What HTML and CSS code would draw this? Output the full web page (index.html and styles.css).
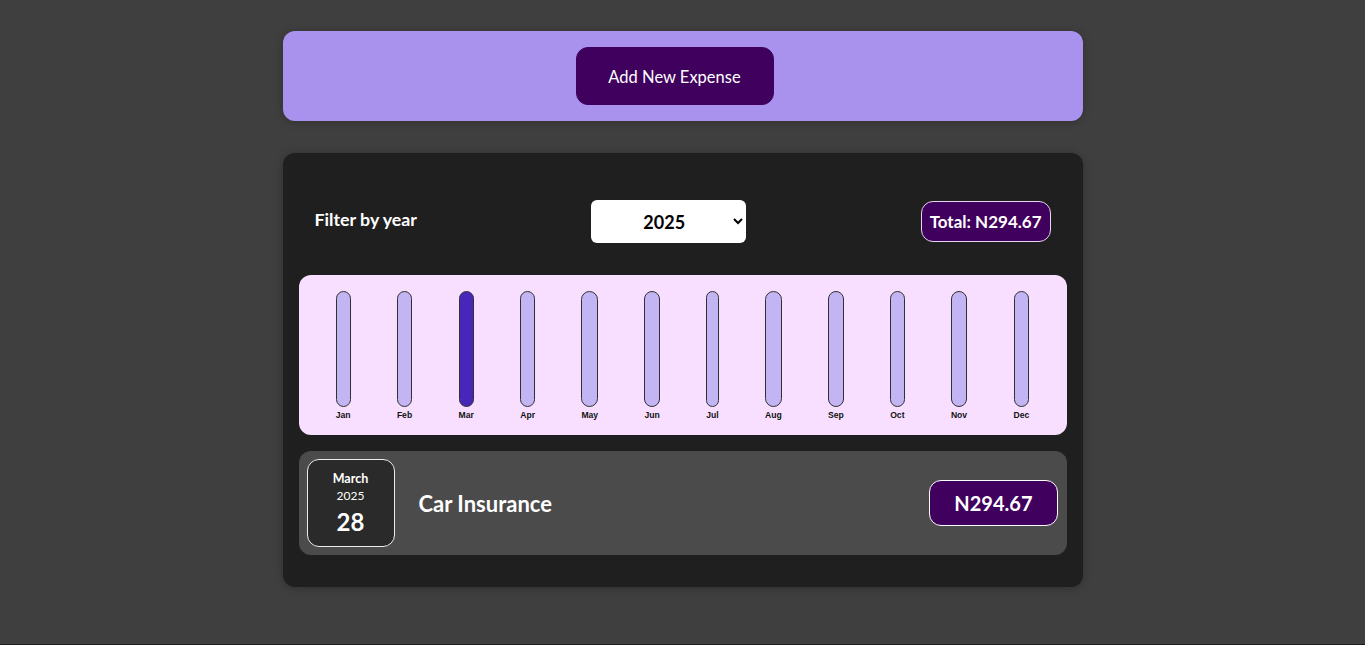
FILE: index.html
```html
<!DOCTYPE html>
<html lang="en">
<head>
<meta charset="utf-8">
<title>Expenses</title>
<link rel="stylesheet" href="styles.css">
</head>
<body>
<div class="new-expense">
  <button class="new-expense__btn">Add New Expense</button>
</div>
<div class="expenses">
  <div class="filter">
    <label class="filter__label">Filter by year</label>
    <select class="filter__select">
      <option>2022</option>
      <option>2023</option>
      <option>2024</option>
      <option selected>2025</option>
    </select>
    <div class="total">Total: N294.67</div>
  </div>
  <div class="chart">
    <div class="chart-bar"><div class="chart-bar__inner"></div><div class="chart-bar__label">Jan</div></div>
    <div class="chart-bar"><div class="chart-bar__inner"></div><div class="chart-bar__label">Feb</div></div>
    <div class="chart-bar"><div class="chart-bar__inner chart-bar__inner--fill"></div><div class="chart-bar__label">Mar</div></div>
    <div class="chart-bar"><div class="chart-bar__inner"></div><div class="chart-bar__label">Apr</div></div>
    <div class="chart-bar"><div class="chart-bar__inner"></div><div class="chart-bar__label">May</div></div>
    <div class="chart-bar"><div class="chart-bar__inner"></div><div class="chart-bar__label">Jun</div></div>
    <div class="chart-bar"><div class="chart-bar__inner"></div><div class="chart-bar__label">Jul</div></div>
    <div class="chart-bar"><div class="chart-bar__inner"></div><div class="chart-bar__label">Aug</div></div>
    <div class="chart-bar"><div class="chart-bar__inner"></div><div class="chart-bar__label">Sep</div></div>
    <div class="chart-bar"><div class="chart-bar__inner"></div><div class="chart-bar__label">Oct</div></div>
    <div class="chart-bar"><div class="chart-bar__inner"></div><div class="chart-bar__label">Nov</div></div>
    <div class="chart-bar"><div class="chart-bar__inner"></div><div class="chart-bar__label">Dec</div></div>
  </div>
  <div class="expense-item">
    <div class="expense-date">
      <div class="expense-date__month">March</div>
      <div class="expense-date__year">2025</div>
      <div class="expense-date__day">28</div>
    </div>
    <h2 class="expense-item__title">Car Insurance</h2>
    <div class="expense-item__price">N294.67</div>
  </div>
</div>
</body>
</html>
```
FILE: styles.css
```css
* { box-sizing: border-box; }

body {
  margin: 0;
  padding-top: 31px;
  min-height: 645px;
  background: #3f3f3f;
  font-family: Lato, "Noto Sans", sans-serif;
  border-bottom: 1px solid #1e1b1d;
}

.new-expense {
  width: 800px;
  margin: 0 auto;
  padding: 16px;
  background: #a892ee;
  border-radius: 12px;
  text-align: center;
  box-shadow: 0 1px 8px rgba(0, 0, 0, 0.25);
}

.new-expense__btn {
  width: 198px;
  height: 58px;
  margin-right: 16px;
  padding-top: 3px;
  border: 1px solid #40005d;
  border-radius: 12px;
  background: #40005d;
  color: #fff;
  font-family: inherit;
  font-size: 16.5px;
  cursor: pointer;
}

.expenses {
  width: 800px;
  height: 434px;
  margin: 32px auto 0;
  padding: 16px;
  background: #1f1f1f;
  border-radius: 12px;
  box-shadow: 0 1px 8px rgba(0, 0, 0, 0.25);
}

.filter {
  display: flex;
  align-items: center;
  justify-content: space-between;
  margin-top: 31px;
  padding: 0 16px;
  color: #fff;
}

.filter__label {
  font-weight: bold;
  font-size: 17.8px;
  margin-top: -5px;
}

.filter__select {
  width: 155px;
  height: 43px;
  padding: 0 8px 0 48px;
  border: none;
  border-radius: 6px;
  background: #fff;
  font-family: inherit;
  font-size: 18px;
  font-weight: bold;
  color: #000;
}

.total {
  height: 41px;
  padding: 0 8px;
  border: 1px solid #e6d6ee;
  border-radius: 12px;
  background: #40005d;
  font-size: 17px;
  font-weight: bold;
  line-height: 39px;
}

.chart {
  display: flex;
  justify-content: space-around;
  height: 160px;
  margin-top: 32px;
  padding: 16px 14px;
  background: #f8dfff;
  border-radius: 12px;
}

.chart-bar {
  display: flex;
  flex-direction: column;
  align-items: center;
  height: 128px;
}

.chart-bar__inner {
  flex: 1;
  width: 100%;
  border: 1px solid #313131;
  border-radius: 12px;
  background: #c3b4f3;
}

.chart-bar__inner--fill {
  background: #4826b9;
}

.chart-bar__label {
  height: 12px;
  padding-top: 3px;
  font-family: "Liberation Sans", Arial, sans-serif;
  font-size: 8.6px;
  font-weight: bold;
  line-height: 10px;
  color: #111;
}

.expense-item {
  display: flex;
  align-items: center;
  height: 104px;
  margin-top: 16px;
  padding: 8px;
  background: #4b4b4b;
  border-radius: 12px;
}

.expense-date {
  display: flex;
  flex-direction: column;
  align-items: center;
  justify-content: center;
  width: 88px;
  height: 88px;
  border: 1px solid #ececec;
  border-radius: 12px;
  background: #2a2a2a;
  color: #fff;
}

.expense-date__month {
  font-size: 12.5px;
  font-weight: bold;
  line-height: 16px;
  margin-top: 3px;
}

.expense-date__year {
  font-size: 12px;
  line-height: 17px;
}

.expense-date__day {
  font-size: 24px;
  font-weight: bold;
  line-height: 35px;
}

.expense-item__title {
  flex: 1;
  margin: 0 0 0 24px;
  color: #fff;
  font-size: 22px;
  font-weight: bold;
}

.expense-item__price {
  height: 46px;
  margin-right: 1px;
  padding: 0 24px;
  border: 1px solid #fff;
  border-radius: 12px;
  background: #40005d;
  color: #fff;
  font-size: 20px;
  font-weight: bold;
  line-height: 44px;
}
```
